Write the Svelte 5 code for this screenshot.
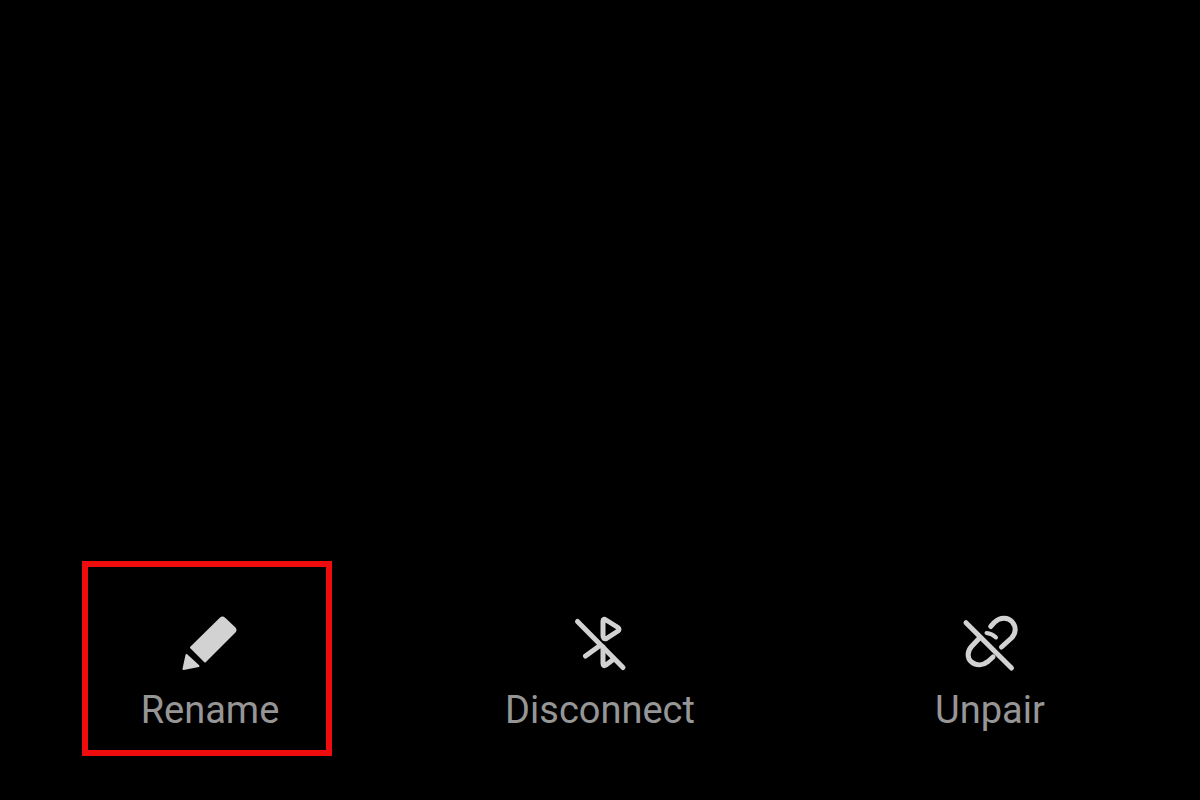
<script>
  const actions = [
    { id: 'rename', label: 'Rename' },
    { id: 'disconnect', label: 'Disconnect' },
    { id: 'unpair', label: 'Unpair' }
  ]
  let selected = $state('rename')
</script>

<main>
  <nav class="actions" aria-label="Device actions">
    {#each actions as action}
      <button
        type="button"
        class="action"
        class:selected={selected === action.id}
        onclick={() => (selected = action.id)}
      >
        <svg class="icon" viewBox="0 0 60 60" aria-hidden="true">
          {#if action.id === 'rename'}
            <g class="solid">
              <path d="M40.500 5.500 Q42.500 3.500 44.500 5.500 L54.500 15 Q56.500 17 54.500 19 L25 48.500 L11 34.500 Z" />
              <path d="M6.500 42 L18.500 53 L3.500 56 Z" />
            </g>
          {:else if action.id === 'disconnect'}
            <path d="M7.500 8.500 L53 54.500" />
            <path d="M36.500 25.500 Q33 26.500 33 22.500 V8 Q33 5 36 7 L48 14.500 Q50 16.300 48 18 Z" />
            <path d="M15.500 43 L30 32.500" />
            <path d="M33 34 V50.500 Q33 54 36 52 L42.500 47" />
          {:else}
            <path d="M6 9.700 L51.500 55" />
            <path d="M30.700 13.500 L34.500 9.300 C40.500 3.500 48.500 4.500 52.300 9 C56.500 14 56 20.500 51.500 25 L41.500 34" />
            <path class="tick" d="M26.500 20 Q32 20.500 36 24.500" />
            <path d="M19.500 25 L11.500 33.500 C7 38.500 7 45 11.500 49 C16.500 53 23 52.500 28 48.500 L33 44" />
          {/if}
        </svg>
        <span class="label">{action.label}</span>
      </button>
    {/each}
  </nav>
</main>

<style>
  :global(body) {
    background: #000;
  }

  main {
    display: flex;
    flex-direction: column;
    justify-content: flex-end;
    min-height: 100vh;
    box-sizing: border-box;
    padding: 0 15px 44px;
    font-family: Roboto, sans-serif;
  }

  .actions {
    display: grid;
    grid-template-columns: repeat(3, 1fr);
    justify-items: center;
  }

  .action {
    position: relative;
    display: flex;
    flex-direction: column;
    align-items: center;
    gap: 15px;
    width: 250px;
    max-width: 100%;
    padding: 52px 0 24px;
    border: 0;
    background: none;
    color: #969696;
    font: inherit;
    cursor: pointer;
  }

  /* frame laid over the chosen action */
  .selected::after {
    content: '';
    position: absolute;
    inset: 0 3px 0 -3px;
    border: 6px solid #ee0c0f;
  }

  .icon {
    width: 60px;
    height: 60px;
    fill: none;
    stroke: #d2d2d2;
    stroke-width: 5;
    stroke-linecap: round;
    stroke-linejoin: round;
  }

  .solid {
    fill: #d2d2d2;
    stroke-width: 2;
  }

  .tick {
    stroke-width: 4;
  }

  .label {
    font-size: 38px;
    line-height: 44px;
  }
</style>
